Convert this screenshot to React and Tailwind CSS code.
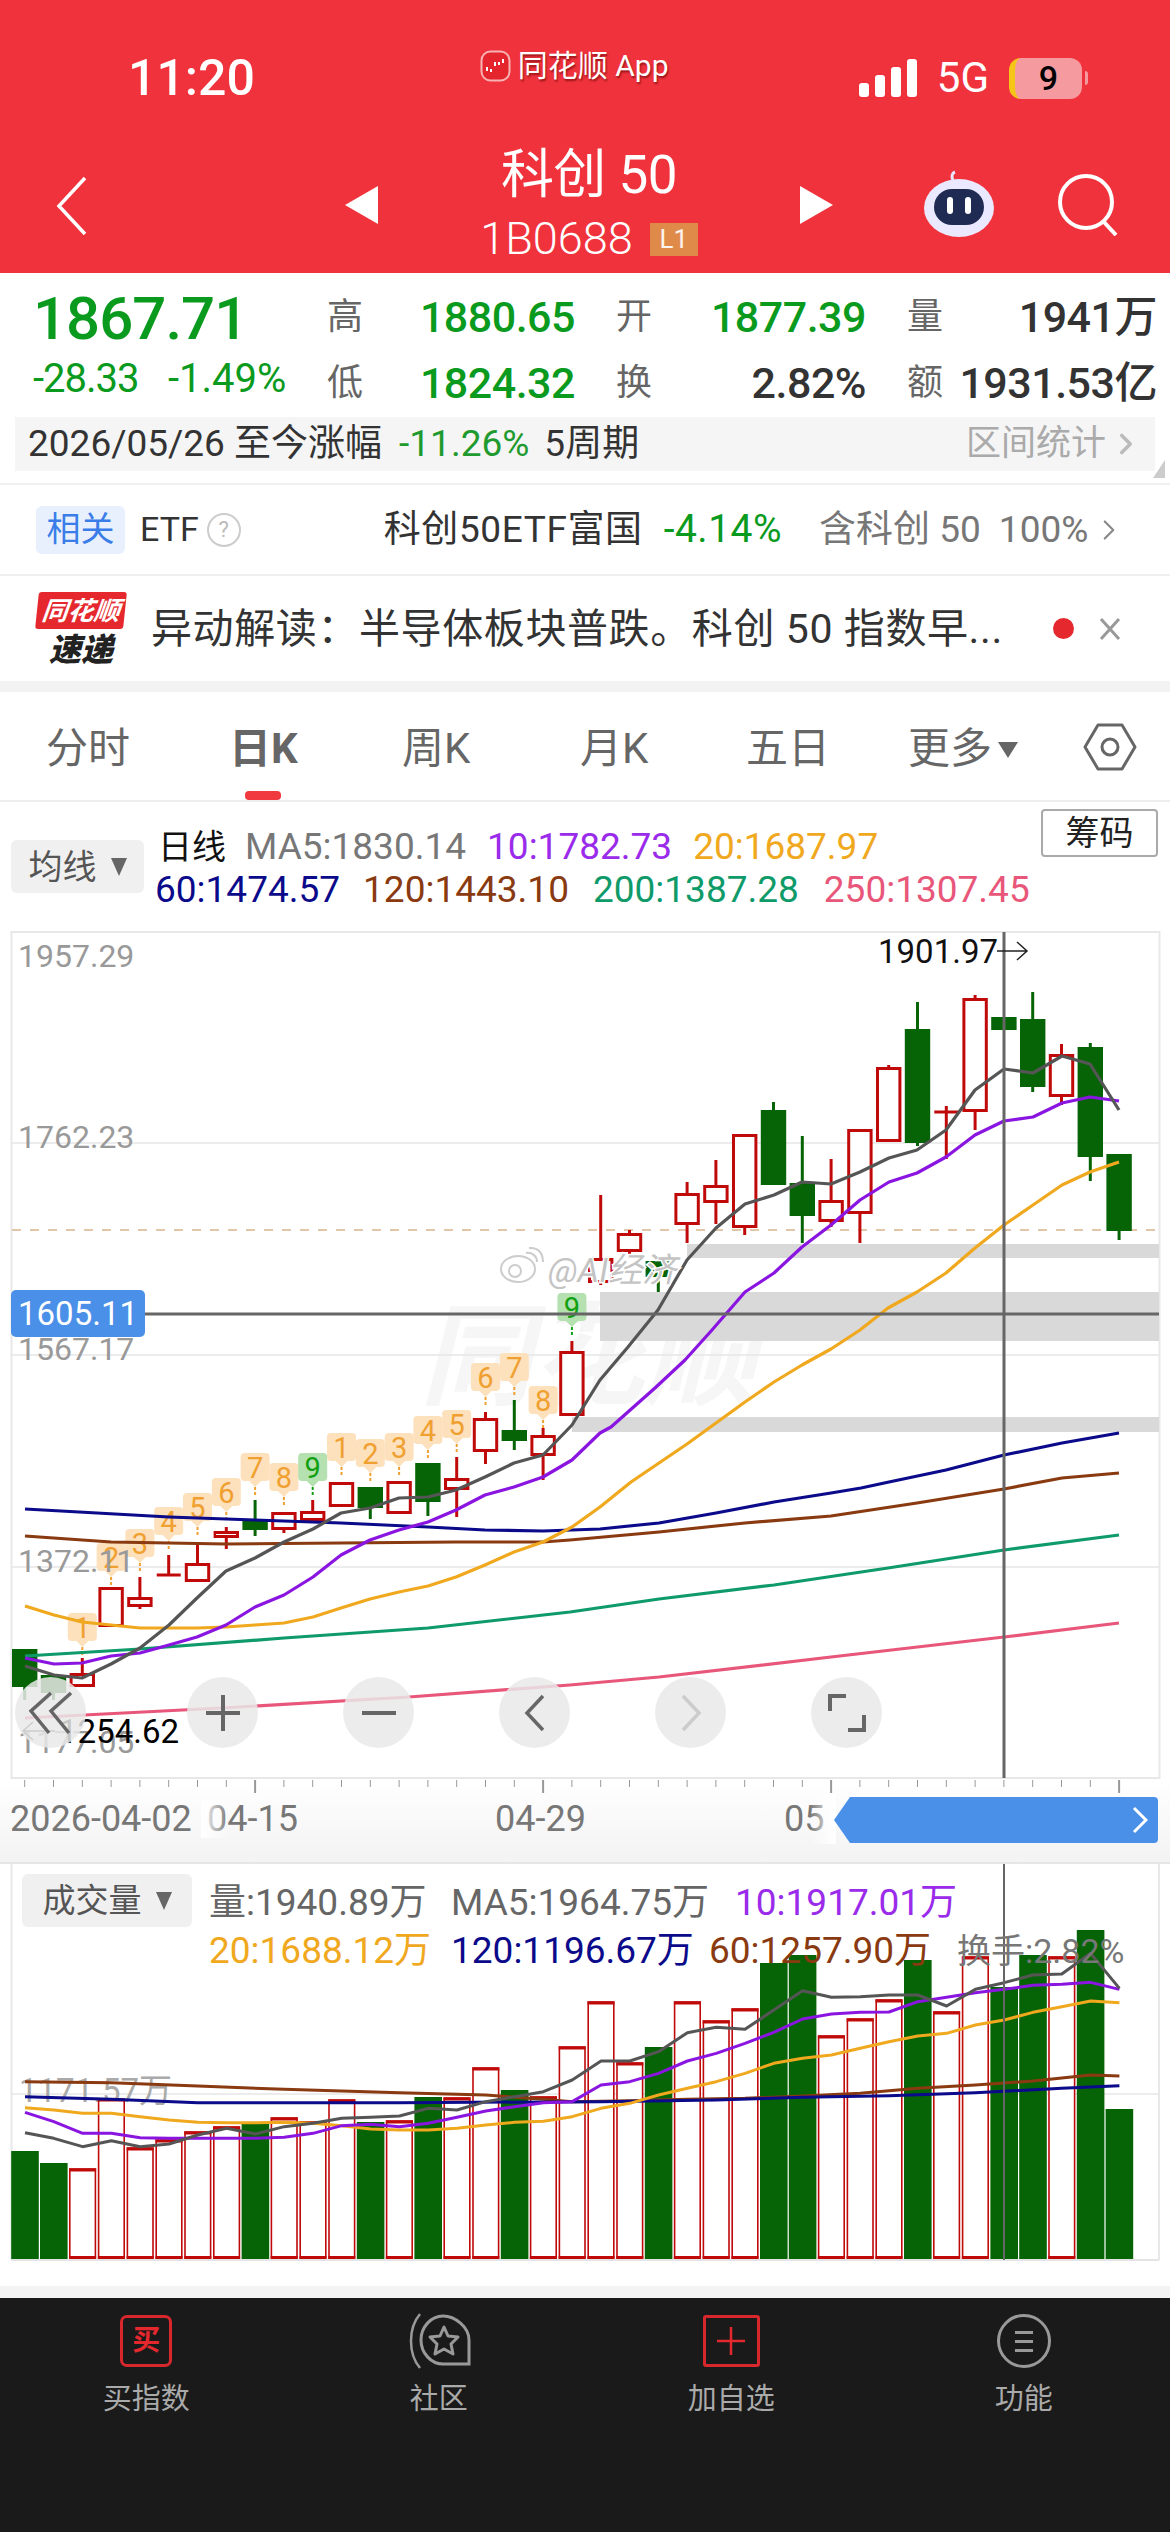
import { ChevronRight } from "lucide-react";

const GREEN = "#066406";
const RED = "#c00a0a";
const cx = (i) => 24.7 + 28.8 * i;

// i, type, body top, body bottom, high, low
const candles = [
  ["g", 1649, 1687, 1649, 1700], ["g", 1675, 1693, 1675, 1700], ["r", 1673, 1687, 1658, 1687],
  ["r", 1587, 1627, 1587, 1627], ["r", 1597, 1607, 1577, 1609], ["r", 1575, 1575, 1555, 1575],
  ["r", 1563, 1582, 1542, 1582], ["r", 1531, 1538, 1527, 1549], ["g", 1520, 1530, 1500, 1536],
  ["r", 1512, 1530, 1512, 1533], ["r", 1511, 1521, 1500, 1523], ["r", 1482, 1507, 1482, 1507],
  ["g", 1487, 1508, 1487, 1519], ["r", 1481, 1514, 1481, 1514], ["g", 1463, 1502, 1463, 1516],
  ["r", 1478, 1490, 1457, 1517], ["r", 1418, 1452, 1412, 1464], ["g", 1430, 1441, 1400, 1450],
  ["r", 1435, 1456, 1428, 1480], ["r", 1351, 1416, 1341, 1416], ["r", 1258, 1283, 1195, 1285],
  ["r", 1233, 1252, 1230, 1255], ["g", 1261, 1277, 1261, 1292], ["r", 1193, 1225, 1182, 1243],
  ["r", 1185, 1203, 1160, 1224], ["r", 1134, 1228, 1134, 1235], ["g", 1110, 1185, 1102, 1185],
  ["g", 1183, 1216, 1136, 1243], ["r", 1200, 1222, 1159, 1227], ["r", 1129, 1214, 1129, 1243],
  ["r", 1067, 1142, 1065, 1142], ["g", 1029, 1143, 1002, 1146], ["r", 1112, 1112, 1106, 1159],
  ["r", 998, 1112, 995, 1130], ["g", 1017, 1030, 1017, 1030], ["g", 1019, 1087, 992, 1092],
  ["r", 1054, 1097, 1044, 1105], ["g", 1047, 1157, 1043, 1181], ["g", 1154, 1231, 1154, 1240],
];

// candle index, digit, box top
const tdLabels = [
  [2, 1, 1613], [3, 2, 1543], [4, 3, 1529], [5, 4, 1507], [6, 5, 1493], [7, 6, 1478], [8, 7, 1453],
  [9, 8, 1463], [10, 9, 1453], [11, 1, 1433], [12, 2, 1439], [13, 3, 1433], [14, 4, 1416], [15, 5, 1410],
  [16, 6, 1363], [17, 7, 1353], [18, 8, 1386], [19, 9, 1293],
];

const maLines = [
  { color: "#e8577a", pts: "25,1718 222,1708 409,1697 570,1685 659,1677 831,1657 1004,1637 1119,1623" },
  { color: "#0f9a6a", pts: "25,1656 140,1649 284,1638 428,1628 570,1612 659,1599 774,1585 888,1568 1004,1550 1119,1535" },
  { color: "#8a3a10", pts: "25,1536 111,1542 226,1544 341,1543 456,1542 543,1542 570,1540 659,1532 745,1523 831,1516 917,1503 1004,1489 1062,1478 1119,1473" },
  { color: "#0a0a8a", pts: "25,1509 169,1517 255,1520 341,1523 428,1527 485,1530 543,1531 600,1529 659,1523 716,1513 774,1502 831,1493 861,1488 889,1482 946,1470 1004,1455 1062,1443 1119,1433" },
  { color: "#f0a81e", pts: "25,1606 54,1615 82,1622 111,1625 140,1628 169,1628 197,1628 226,1627 255,1625 284,1623 313,1617 341,1608 370,1599 399,1592 428,1586 456,1577 485,1565 514,1552 543,1542 572,1527 600,1507 631,1482 659,1463 687,1444 716,1423 745,1402 774,1382 802,1365 831,1349 860,1330 888,1308 917,1292 946,1273 975,1248 1004,1225 1033,1205 1062,1185 1090,1172 1119,1162" },
  { color: "#8a14e0", pts: "25,1658 54,1664 82,1663 111,1656 140,1653 169,1645 197,1637 226,1625 255,1607 284,1595 313,1577 341,1555 370,1540 399,1530 428,1522 456,1510 485,1495 514,1487 543,1477 572,1460 600,1433 611,1427 655,1388 685,1360 712,1330 745,1292 774,1273 802,1247 831,1225 860,1200 889,1182 917,1173 946,1157 975,1135 1004,1121 1033,1117 1062,1103 1090,1097 1119,1101" },
  { color: "#555555", pts: "25,1666 54,1675 82,1678 111,1664 140,1648 169,1625 197,1598 226,1571 255,1558 284,1542 313,1529 341,1513 370,1508 399,1498 428,1497 456,1490 485,1477 514,1463 543,1455 572,1425 600,1380 628,1347 658,1310 687,1260 716,1228 745,1204 774,1195 802,1182 831,1184 860,1172 889,1158 917,1150 946,1130 975,1090 1004,1069 1033,1073 1062,1056 1090,1064 1119,1110" },
];

// volume: [type, bar top]
const volumes = [
  ["g", 2151], ["g", 2163], ["r", 2169], ["r", 2099], ["r", 2148], ["r", 2140], ["r", 2132], ["r", 2127],
  ["g", 2123], ["r", 2118], ["r", 2122], ["r", 2100], ["g", 2122], ["r", 2121], ["g", 2097], ["r", 2098],
  ["r", 2068], ["g", 2090], ["r", 2097], ["r", 2047], ["r", 2002], ["r", 2063], ["g", 2047], ["r", 2002],
  ["r", 2021], ["r", 2009], ["g", 1963], ["g", 1955], ["r", 2036], ["r", 2019], ["r", 2000], ["g", 1960],
  ["r", 2012], ["r", 1957], ["g", 1987], ["g", 1955], ["r", 1957], ["g", 1930], ["g", 2109],
];

const volY = (z) => 1780 + z / 3;
const seq = (arr) => arr.map((z, i) => `${25 + 28.8 * i},${volY(z)}`).join(" ");
const pairs = (arr) => arr.map(([i, z]) => `${25 + 28.8 * i},${volY(z)}`).join(" ");

const volLines = [
  { color: "#8a3a10", pts: pairs([[0, 905], [3, 908], [6, 918], [9, 928], [11, 933], [13, 938], [16, 945], [18, 958], [19, 965], [21, 962], [23, 958], [25, 955], [27, 948], [29, 940], [31, 925], [33, 915], [35, 903], [37, 885], [38, 888]]) },
  { color: "#0a0a8a", pts: pairs([[0, 950], [3, 958], [6, 968], [13, 968], [20, 965], [24, 960], [27, 952], [30, 947], [33, 938], [36, 925], [38, 917]]) },
  { color: "#f0a81e", pts: seq([983, 990, 1000, 1000, 1010, 1020, 1027, 1028, 1028, 1027, 1030, 1037, 1047, 1050, 1050, 1045, 1035, 1027, 1024, 1010, 985, 970, 945, 925, 905, 880, 850, 835, 825, 805, 785, 768, 760, 735, 720, 697, 680, 663, 668]) },
  { color: "#8a14e0", pts: seq([997, 1025, 1060, 1060, 1073, 1075, 1075, 1075, 1075, 1072, 1060, 1037, 1033, 1040, 1030, 1012, 993, 980, 968, 965, 915, 905, 880, 843, 820, 790, 757, 717, 702, 697, 696, 665, 652, 638, 628, 616, 613, 607, 628]) },
  { color: "#555555", pts: seq([1058, 1075, 1100, 1082, 1100, 1092, 1065, 1045, 1062, 1040, 1030, 1015, 1012, 1008, 985, 990, 965, 950, 935, 900, 843, 843, 815, 758, 742, 748, 690, 632, 652, 650, 645, 645, 678, 628, 608, 585, 582, 520, 625]) },
];

function StatusBar() {
  return (
    <div className="flex h-[120px] items-start">
      <div className="ml-[128px] mt-[50px] text-[50px] leading-[56px] font-medium text-white">11:20</div>
      <div className="ml-[225px] mt-[47px] flex items-center gap-[7px]">
        <svg width="31" height="32" viewBox="0 0 31 32">
          <rect x="1.5" y="1.5" width="28" height="29" rx="9" fill="#e5252d" stroke="#f7b3b3" strokeWidth="2" />
          <path d="M7 21v-4M11 22v-3M15 16v-4M19 15v-3M23 13v-4" stroke="#fff" strokeWidth="2" />
        </svg>
        <span className="text-[30px] leading-[38px] text-white [text-shadow:1px_2px_2px_rgba(90,0,0,0.6)]">同花顺 App</span>
      </div>
      <div className="ml-auto mr-[82px] mt-[57px] flex items-center">
        <div className="flex h-[38px] items-end gap-[6px]">
          <div className="h-[14px] w-[10px] rounded-[3px] bg-white" />
          <div className="h-[22px] w-[10px] rounded-[3px] bg-white" />
          <div className="h-[30px] w-[10px] rounded-[3px] bg-white" />
          <div className="h-[38px] w-[10px] rounded-[3px] bg-white" />
        </div>
        <span className="ml-[20px] text-[42px] leading-[42px] text-white">5G</span>
        <div className="ml-[20px] flex h-[41px] w-[73px] items-center justify-center overflow-hidden rounded-[12px] border-l-[6px] border-[#f5c518] bg-[#f59a9f] text-[34px] font-medium text-black">9</div>
        <div className="ml-[3px] h-[14px] w-[3px] rounded-r-full bg-[#f59a9f]" />
      </div>
    </div>
  );
}

function NavBar() {
  return (
    <div className="flex h-[153px] items-start">
      <svg className="ml-[54px] mt-[55px]" width="36" height="62" viewBox="0 0 36 62">
        <path d="M31 3 5 31l26 28" fill="none" stroke="#fff" strokeWidth="3.5" />
      </svg>
      <svg className="ml-[255px] mt-[66px]" width="34" height="38" viewBox="0 0 34 38">
        <path d="M33 0v38L0 19z" fill="#fff" />
      </svg>
      <div className="w-[420px] flex flex-col items-center">
        <div className="mt-[24px] text-[53px] leading-[62px] tracking-[-0.5px] text-white">科创 50</div>
        <div className="mt-[15px] flex items-center gap-[17px]">
          <span className="text-[45px] leading-[36px] font-light text-white">1B0688</span>
          <span className="flex h-[33px] w-[48px] items-center justify-center bg-[#e08a4a] text-[26px] text-white/90">L1</span>
        </div>
      </div>
      <svg className="mt-[66px]" width="34" height="38" viewBox="0 0 34 38">
        <path d="M1 0v38l33-19z" fill="#fff" />
      </svg>
      <svg className="ml-[90px] mt-[50px]" width="72" height="68" viewBox="0 0 72 68">
        <path d="M30 10c-2-3-1-7 2-8" fill="none" stroke="#e8e6ff" strokeWidth="3" />
        <ellipse cx="36" cy="38" rx="35" ry="29" fill="#ebe9ff" />
        <rect x="11" y="19" width="50" height="36" rx="18" fill="#1f2b52" />
        <rect x="24" y="27" width="6" height="17" rx="3" fill="#fff" />
        <rect x="42" y="27" width="6" height="17" rx="3" fill="#fff" />
      </svg>
      <svg className="ml-[62px] mt-[54px]" width="64" height="62" viewBox="0 0 64 62">
        <circle cx="29" cy="28" r="26" fill="none" stroke="#fff" strokeWidth="4" />
        <path d="m46 47 13 14" fill="none" stroke="#fff" strokeWidth="4" />
      </svg>
    </div>
  );
}

function Stat({ label, value, green }) {
  return (
    <div className="flex h-[64px] items-center justify-between">
      <span className="text-[36px] text-[#666]">{label}</span>
      <span className={`text-[43px] font-medium tracking-[-0.5px] ${green ? "text-[#0a9a1e]" : "text-[#333]"}`}>{value}</span>
    </div>
  );
}

function Quote() {
  return (
    <div className="h-[210px] bg-white">
      <div className="flex h-[144px]">
        <div className="ml-[33px] w-[294px] pt-[15px] text-[#0a9a1e]">
          <div className="text-[60px] leading-[62px] font-medium tracking-[-1px]">1867.71</div>
          <div className="mt-[11px] flex text-[40px] leading-[36px]">
            <span className="w-[135px] tracking-[-1px]">-28.33</span>
            <span>-1.49%</span>
          </div>
        </div>
        <div className="mt-[12px] grid grid-cols-[248px_250px_250px] gap-x-[41px]">
          <Stat label="高" value="1880.65" green />
          <Stat label="开" value="1877.39" green />
          <Stat label="量" value="1941万" />
          <Stat label="低" value="1824.32" green />
          <Stat label="换" value="2.82%" />
          <Stat label="额" value="1931.53亿" />
        </div>
      </div>
      <div className="relative ml-[15px] flex h-[54px] w-[1140px] items-center bg-[#f5f5f5] pl-[13px] text-[37px] text-[#333]">
        <span>2026/05/26 至今涨幅</span>
        <span className="ml-[17px] text-[#1f9a2e]">-11.26%</span>
        <span className="ml-[15px]">5周期</span>
        <span className="ml-auto text-[35px] text-[#aaa]">区间统计</span>
        <ChevronRight className="mr-[12px] ml-[3px] text-[#bbb]" size={34} strokeWidth={2.5} />
        <svg className="absolute -right-[10px] -bottom-[7px]" width="12" height="18" viewBox="0 0 12 18">
          <path d="M12 0v18H0z" fill="#ccc" />
        </svg>
      </div>
    </div>
  );
}

function EtfRow() {
  return (
    <div className="flex h-[91px] items-center border-t-2 border-[#f0f0f0] bg-white text-[37px]">
      <span className="ml-[36px] flex h-[48px] w-[89px] items-center justify-center rounded-[6px] bg-[#e8f0fe] text-[34px] text-[#3b7de8]">相关</span>
      <span className="ml-[15px] text-[34px] text-[#333]">ETF</span>
      <span className="ml-[8px] flex h-[34px] w-[34px] items-center justify-center rounded-full border-2 border-[#ccc] text-[22px] text-[#bbb]">?</span>
      <span className="ml-[143px] tracking-[0.6px] text-[#333]">科创50ETF富国</span>
      <span className="ml-[21px] text-[39px] tracking-[0.5px] text-[#0a9a1e]">-4.14%</span>
      <span className="ml-[37px] text-[#777]">含科创 50</span>
      <span className="ml-[18px] text-[#777]">100%</span>
      <ChevronRight className="ml-[4px] text-[#888]" size={34} strokeWidth={1.5} />
    </div>
  );
}

function NewsRow() {
  return (
    <div className="flex h-[107px] items-center border-t-2 border-[#f0f0f0] bg-white">
      <div className="ml-[37px] flex w-[88px] flex-col items-center">
        <div className="flex h-[37px] w-[88px] -skew-x-6 items-center justify-center rounded-[3px] bg-[#e5282e] text-[26px] leading-none font-bold italic text-white">同花顺</div>
        <div className="mt-[5px] text-[32px] leading-[32px] font-black italic text-[#222]">速递</div>
      </div>
      <div className="ml-[26px] w-[860px] text-[41px] leading-[48px] tracking-[0.6px] whitespace-nowrap text-[#333]">异动解读：半导体板块普跌。科创 50 指数早...</div>
      <div className="ml-[42px] h-[21px] w-[21px] rounded-full bg-[#e5282e]" />
      <svg className="ml-[24px]" width="24" height="26" viewBox="0 0 24 26">
        <path d="m3 3 18 20M21 3 3 23" stroke="#999" strokeWidth="3" fill="none" />
      </svg>
    </div>
  );
}

function Tabs() {
  const tabClass = "absolute top-[31px] text-[42px] leading-[52px] text-[#666]";
  return (
    <div className="relative h-[110px] border-b-2 border-[#eee] bg-white">
      <span className={`${tabClass} left-[46px]`}>分时</span>
      <span className={`${tabClass} left-[229px] font-bold text-[#222]`}>日K</span>
      <span className={`${tabClass} left-[402px]`}>周K</span>
      <span className={`${tabClass} left-[580px]`}>月K</span>
      <span className={`${tabClass} left-[746px]`}>五日</span>
      <span className={`${tabClass} left-[908px]`}>更多</span>
      <svg className="absolute left-[998px] top-[50px]" width="20" height="16" viewBox="0 0 20 16">
        <path d="M0 0h20L10 16z" fill="#666" />
      </svg>
      <svg className="absolute left-[1082px] top-[31px]" width="56" height="48" viewBox="0 0 56 48">
        <path d="M16 2h24l13 22-13 22H16L3 24z" fill="none" stroke="#666" strokeWidth="3" strokeLinejoin="round" />
        <circle cx="28" cy="24" r="8" fill="none" stroke="#666" strokeWidth="3" />
      </svg>
      <div className="absolute bottom-[0px] left-[245px] h-[9px] w-[36px] rounded-[4px] bg-[#f03a40]" />
    </div>
  );
}

function Legend() {
  return (
    <div className="flex h-[128px] bg-white text-[37px] leading-[40px]">
      <div className="ml-[11px] mt-[38px] flex h-[53px] w-[133px] items-center justify-center gap-[14px] rounded-[6px] bg-[#f0f0f0] text-[34px] text-[#555]">
        均线
        <svg width="16" height="18" viewBox="0 0 16 18"><path d="M0 0h16L8 18z" fill="#666" /></svg>
      </div>
      <div className="ml-[11px] mt-[25px] flex flex-col gap-[3px]">
        <div className="flex">
          <span className="ml-[3px] text-[34px] text-[#111]">日线</span>
          <span className="ml-[19px] text-[#777]">MA5:1830.14</span>
          <span className="ml-[21px] text-[#9a2bea]">10:1782.73</span>
          <span className="ml-[21px] text-[#f0a81e]">20:1687.97</span>
        </div>
        <div className="flex">
          <span className="text-[#0a0a8a]">60:1474.57</span>
          <span className="ml-[23px] text-[#8a3a10]">120:1443.10</span>
          <span className="ml-[24px] text-[#0f9a6a]">200:1387.28</span>
          <span className="ml-[25px] text-[#e8577a]">250:1307.45</span>
        </div>
      </div>
      <div className="ml-auto mr-[12px] mt-[7px] flex h-[48px] w-[117px] items-center justify-center rounded-[4px] border-2 border-[#aaa] text-[34px] text-[#222]">筹码</div>
    </div>
  );
}

function Candle({ i, type, top, bottom, high, low }) {
  const x = cx(i);
  const color = type === "g" ? GREEN : RED;
  if (top === bottom) {
    return (
      <g stroke={color} strokeWidth="3">
        <line x1={x} x2={x} y1={high} y2={low} />
        <line x1={x - 12} x2={x + 12} y1={top} y2={top} />
      </g>
    );
  }
  return (
    <g>
      <line x1={x} x2={x} y1={high} y2={low} stroke={color} strokeWidth="3" />
      {type === "g" ? (
        <rect x={x - 12.7} y={top} width="25.4" height={bottom - top} fill={color} />
      ) : (
        <rect x={x - 11.2} y={top + 1.5} width="22.4" height={bottom - top - 3} fill="#fff" stroke={color} strokeWidth="3" />
      )}
    </g>
  );
}

function TdLabel({ i, digit, top }) {
  const x = cx(i);
  const nine = digit === 9;
  const box = nine ? "#b5e0b0" : "#fde0bc";
  const ink = nine ? "#10a010" : "#f0a030";
  return (
    <g>
      <rect x={x - 14.5} y={top} width="29" height="28" rx="4" fill={box} />
      <path d={`M${x - 6} ${top + 28}h12l-6 6z`} fill={box} />
      <line x1={x} x2={x} y1={top + 34} y2={top + 44} stroke={ink} strokeWidth="2" strokeDasharray="3 2" />
      <text x={x} y={top + 25} textAnchor="middle" fontSize="29" fill={ink}>{digit}</text>
    </g>
  );
}

function ZoomButton({ children, className }) {
  return (
    <div className={`flex h-[71px] w-[71px] items-center justify-center rounded-full bg-[#e9e9e9]/85 ${className || ""}`}>
      {children}
    </div>
  );
}

function MainChart() {
  return (
    <div className="relative h-[850px] bg-white">
      <svg className="block" width="1170" height="850" viewBox="0 930 1170 850">
        <rect x="11.5" y="932" width="1148" height="846" fill="#fff" stroke="#e8e8e8" strokeWidth="2" />
        <text x="420" y="1396" fontSize="112" fontWeight="700" fontStyle="italic" fill="#f6f6f6">同花顺</text>
        {[1143, 1355, 1567].map((y) => (
          <line key={y} x1="12" x2="1159" y1={y} y2={y} stroke="#e6e6e6" strokeWidth="1.5" />
        ))}
        <rect x="687" y="1244" width="472" height="14" fill="#d9d9d9" />
        <rect x="600" y="1292" width="559" height="49" fill="#d9d9d9" />
        <rect x="572" y="1417" width="587" height="15" fill="#d9d9d9" />
        <line x1="12" x2="1159" y1="1230" y2="1230" stroke="#d8b48e" strokeWidth="1.5" strokeDasharray="9 9" />
        {candles.map(([type, top, bottom, high, low], i) => (
          <Candle key={i} i={i} type={type} top={top} bottom={bottom} high={high} low={low} />
        ))}
        {tdLabels.map(([i, digit, top]) => (
          <TdLabel key={i} i={i} digit={digit} top={top} />
        ))}
        {maLines.map((l) => (
          <polyline key={l.color} points={l.pts} fill="none" stroke={l.color} strokeWidth="3.2" strokeLinejoin="round" />
        ))}
        <line x1="1004" x2="1004" y1="932" y2="1778" stroke="#666" strokeWidth="3" />
        <line x1="145" x2="1159" y1="1314" y2="1314" stroke="#666" strokeWidth="3" />
        <g fontSize="32" fill="#999">
          <text x="18" y="967">1957.29</text>
          <text x="18" y="1148">1762.23</text>
          <text x="18" y="1360">1567.17</text>
          <text x="18" y="1572">1372.11</text>
          <text x="18" y="1753">1177.05</text>
        </g>
        <text x="878" y="963" fontSize="33" fill="#111">1901.97</text>
        <path d="M997 951h30m-10-9 10 9-10 9" fill="none" stroke="#222" strokeWidth="1.5" />
        <path d="M23 1731h32m-22-9-10 9 10 9" fill="none" stroke="#333" strokeWidth="1.5" />
        <text x="59" y="1743" fontSize="33" fill="#000">1254.62</text>
        <g fill="none" stroke="#ccc" strokeWidth="2">
          <ellipse cx="518" cy="1269" rx="17" ry="13" fill="#fff" />
          <circle cx="515" cy="1271" r="6" />
          <path d="M526 1253c6-1 11 3 11 9M529 1248c9-1 14 5 14 14" />
        </g>
        <text x="548" y="1282" fontSize="34" fontStyle="italic" fill="#c4c4c4" stroke="#fff" strokeWidth="3" paintOrder="stroke">@AI经济</text>
      </svg>
      <div className="absolute left-[11px] top-[360px] flex h-[47px] w-[134px] items-center justify-center rounded-[5px] bg-[#4a90e8] text-[33px] text-white">1605.11</div>
      <div className="absolute left-[15px] top-[747px] flex gap-[85px]">
        <ZoomButton className="mr-[16px]">
          <svg width="52" height="44" viewBox="0 0 52 44">
            <path d="M26 2 6 20l18 22M46 2 26 20l18 22" fill="none" stroke="#666" strokeWidth="3.5" />
          </svg>
        </ZoomButton>
        <ZoomButton>
          <svg width="36" height="40" viewBox="0 0 36 40"><path d="M18 2v36M1 20h34" fill="none" stroke="#666" strokeWidth="4" /></svg>
        </ZoomButton>
        <ZoomButton>
          <svg width="36" height="8" viewBox="0 0 36 8"><path d="M1 4h34" fill="none" stroke="#666" strokeWidth="4" /></svg>
        </ZoomButton>
        <ZoomButton>
          <svg width="22" height="38" viewBox="0 0 22 38"><path d="M19 2 3 19l16 17" fill="none" stroke="#666" strokeWidth="3.5" /></svg>
        </ZoomButton>
        <ZoomButton>
          <svg width="22" height="38" viewBox="0 0 22 38"><path d="m3 2 16 17L3 36" fill="none" stroke="#ccc" strokeWidth="3.5" /></svg>
        </ZoomButton>
        <ZoomButton>
          <svg width="38" height="38" viewBox="0 0 38 38">
            <path d="M2 17V2h16M36 21v15H20" fill="none" stroke="#666" strokeWidth="4" />
          </svg>
        </ZoomButton>
      </div>
    </div>
  );
}

function DateAxis() {
  return (
    <div className="relative h-[84px] border-b-2 border-[#e6e6e6] bg-gradient-to-b from-white to-[#f3f3f3] text-[36px] text-[#777]">
      <svg className="absolute left-0 top-0" width="1170" height="16" viewBox="0 0 1170 16">
        {volumes.map((_, i) => {
          const major = i % 10 === 8;
          return <line key={i} x1={cx(i)} x2={cx(i)} y1="0" y2={major ? 13 : 7} stroke="#999" strokeWidth={major ? 2 : 1} />;
        })}
      </svg>
      <span className="absolute left-[207px] top-[20px] leading-[38px]">04-15</span>
      <div className="absolute left-[201px] top-[20px] h-[38px] w-[28px] bg-gradient-to-r from-white to-white/0" />
      <span className="absolute left-[10px] top-[20px] leading-[38px]">2026-04-02</span>
      <span className="absolute left-[495px] top-[20px] leading-[38px]">04-29</span>
      <span className="absolute left-[784px] top-[20px] leading-[38px]">05</span>
      <div className="absolute left-[810px] top-[14px] h-[50px] w-[26px] bg-gradient-to-r from-white/0 to-white" />
      <svg className="absolute left-[832px] top-[17px]" width="22" height="46" viewBox="0 0 22 46">
        <path d="M22 0H18L2 23l16 23h4z" fill="#4a90e8" />
      </svg>
      <div className="absolute left-[850px] top-[17px] flex h-[46px] w-[308px] items-center justify-end rounded-r-[4px] bg-[#4a90e8] pr-[10px]">
        <svg width="16" height="28" viewBox="0 0 16 28"><path d="m2 2 12 12L2 26" fill="none" stroke="#fff" strokeWidth="3" /></svg>
      </div>
    </div>
  );
}

function VolumeChart() {
  return (
    <div className="relative h-[422px] bg-white">
      <svg className="block" width="1170" height="422" viewBox="0 1864 1170 422">
        <line x1="11.5" x2="11.5" y1="1864" y2="2260" stroke="#e8e8e8" strokeWidth="2" />
        <line x1="1159" x2="1159" y1="1864" y2="2260" stroke="#e8e8e8" strokeWidth="2" />
        <line x1="11" x2="1159" y1="2094" y2="2094" stroke="#e6e6e6" strokeWidth="1.5" />
        <text x="19" y="2102" fontSize="33" fill="#aaa">1171.57万</text>
        {volumes.map(([type, top], i) => {
          const x = 25 + 28.8 * i;
          return type === "g" ? (
            <rect key={i} x={x - 13.8} y={top} width="27.6" height={2259 - top} fill={GREEN} />
          ) : (
            <g key={i}>
              <rect x={x - 12.8} y={top} width="25.6" height={2258 - top} fill="#fff" stroke={RED} strokeWidth="1.6" />
              <line x1={x - 13.5} x2={x + 13.5} y1={top + 1} y2={top + 1} stroke={RED} strokeWidth="3" />
              <line x1={x - 13.5} x2={x + 13.5} y1="2257.5" y2="2257.5" stroke={RED} strokeWidth="3" />
            </g>
          );
        })}
        <line x1="11" x2="1159" y1="2260" y2="2260" stroke="#e4e4e4" strokeWidth="2" />
        {volLines.map((l) => (
          <polyline key={l.color} points={l.pts} fill="none" stroke={l.color} strokeWidth="3" strokeLinejoin="round" />
        ))}
        <line x1="1004" x2="1004" y1="1864" y2="2260" stroke="#666" strokeWidth="2" />
      </svg>
      <div className="absolute left-[22px] top-[10px] flex h-[53px] w-[170px] items-center justify-center gap-[14px] rounded-[6px] bg-[#f0f0f0] text-[33px] text-[#555]">
        成交量
        <svg width="16" height="18" viewBox="0 0 16 18"><path d="M0 0h16L8 18z" fill="#666" /></svg>
      </div>
      <div className="absolute left-[209px] top-[19px] flex w-[950px] flex-col gap-[8px] text-[37px] leading-[40px] whitespace-nowrap">
        <div className="flex text-[#666]">
          <span className="w-[242px]">量:1940.89万</span>
          <span className="w-[284px]">MA5:1964.75万</span>
          <span className="text-[#9a2bea]">10:1917.01万</span>
        </div>
        <div className="flex">
          <span className="w-[242px] text-[#f0a81e]">20:1688.12万</span>
          <span className="w-[258px] text-[#0a0a8a]">120:1196.67万</span>
          <span className="w-[248px] text-[#8a3a10]">60:1257.90万</span>
          <span className="text-[34px] text-[#777]">换手:2.82%</span>
        </div>
      </div>
    </div>
  );
}

function FooterItem({ icon, label }) {
  return (
    <div className="flex flex-col items-center">
      <div className="flex h-[58px] items-center">{icon}</div>
      <span className="mt-[12px] text-[29px] leading-[34px] text-[#aaa]">{label}</span>
    </div>
  );
}

function Footer() {
  return (
    <div className="grid flex-1 grid-cols-4 bg-[#1a1a1a] pt-[14px]">
      <FooterItem
        label="买指数"
        icon={
          <div className="flex h-[52px] w-[52px] items-center justify-center rounded-[7px] border-[3px] border-[#d8282e] text-[28px] font-bold text-[#e5282e]">买</div>
        }
      />
      <FooterItem
        label="社区"
        icon={
          <svg width="64" height="58" viewBox="0 0 64 58">
            <path d="M13 2C1 16 1 42 13 56" fill="none" stroke="#999" strokeWidth="2.5" />
            <path d="M62 52H36C24 52 14 41 14 28S24 4 36 4s26 11 26 24z" fill="none" stroke="#999" strokeWidth="3" />
            <path d="m37 15 4 9 10 1-7 7 2 10-9-5-9 5 2-10-7-7 10-1z" fill="none" stroke="#999" strokeWidth="3" strokeLinejoin="round" />
          </svg>
        }
      />
      <FooterItem
        label="加自选"
        icon={
          <div className="flex h-[52px] w-[57px] items-center justify-center rounded-[3px] border-[3px] border-[#d8282e]">
            <svg width="28" height="28" viewBox="0 0 28 28"><path d="M14 0v28M0 14h28" stroke="#e5282e" strokeWidth="2.5" /></svg>
          </div>
        }
      />
      <FooterItem
        label="功能"
        icon={
          <div className="flex h-[54px] w-[54px] flex-col items-center justify-center gap-[6px] rounded-full border-[3px] border-[#999]">
            <div className="h-[3px] w-[18px] bg-[#999]" />
            <div className="h-[3px] w-[18px] bg-[#999]" />
            <div className="h-[3px] w-[18px] bg-[#999]" />
          </div>
        }
      />
    </div>
  );
}

export default function App() {
  return (
    <div className="flex h-[2532px] w-[1170px] flex-col overflow-hidden bg-white font-[Roboto,'Noto_Sans_CJK_SC',sans-serif]">
      <div className="h-[273px] bg-[#f0323c]">
        <StatusBar />
        <NavBar />
      </div>
      <Quote />
      <EtfRow />
      <NewsRow />
      <div className="h-[11px] bg-[#f3f3f3]" />
      <Tabs />
      <Legend />
      <MainChart />
      <DateAxis />
      <VolumeChart />
      <div className="h-[12px] bg-[#f3f3f3]" />
      <Footer />
    </div>
  );
}
